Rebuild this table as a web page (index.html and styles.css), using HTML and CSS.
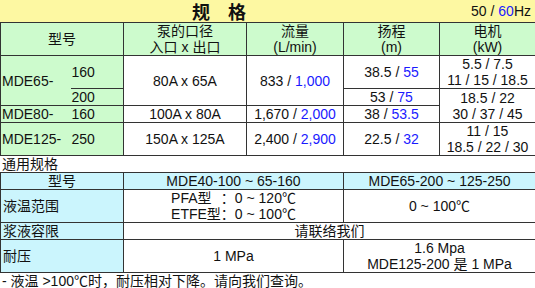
FILE: index.html
```html
<!DOCTYPE html>
<html lang="zh-CN">
<head>
<meta charset="utf-8">
<title>规格</title>
<link rel="stylesheet" href="styles.css">
</head>
<body>
<div class="title-bar">
  <div class="title">规　格</div>
  <div class="hz">50 / <span class="b">60</span>Hz</div>
</div>
<table class="spec">
  <colgroup>
    <col class="c-a"><col class="c-b"><col class="c-c"><col class="c-d"><col class="c-e"><col class="c-f">
  </colgroup>
  <tr class="h-row">
    <th colspan="2">型号</th>
    <th>泵的口径<br>入口 x 出口</th>
    <th>流量<br>(L/min)</th>
    <th>扬程<br>(m)</th>
    <th>电机<br>(kW)</th>
  </tr>
  <tr class="r-tall">
    <td rowspan="2" class="model">MDE65-</td>
    <td class="num split">160</td>
    <td rowspan="2">80A x 65A</td>
    <td rowspan="2">833 / <span class="b">1,000</span></td>
    <td>38.5 / <span class="b">55</span></td>
    <td>5.5 / 7.5<br>11 / 15 / 18.5</td>
  </tr>
  <tr class="r-mid">
    <td class="num">200</td>
    <td>53 / <span class="b">75</span></td>
    <td rowspan="2">18.5 / 22<br>30 / 37 / 45</td>
  </tr>
  <tr class="r-short">
    <td class="model">MDE80-</td>
    <td class="num">160</td>
    <td>100A x 80A</td>
    <td>1,670 / <span class="b">2,000</span></td>
    <td>38 / <span class="b">53.5</span></td>
  </tr>
  <tr class="r-tall last">
    <td class="model">MDE125-</td>
    <td class="num">250</td>
    <td>150A x 125A</td>
    <td>2,400 / <span class="b">2,900</span></td>
    <td>22.5 / <span class="b">32</span></td>
    <td>11 / 15<br>18.5 / 22 / 30</td>
  </tr>
</table>
<div class="sub-title">通用规格</div>
<table class="general">
  <colgroup>
    <col class="g-a"><col class="g-b"><col class="g-c">
  </colgroup>
  <tr class="g-head">
    <th>型号</th>
    <th>MDE40-100 ~ 65-160</th>
    <th>MDE65-200 ~ 125-250</th>
  </tr>
  <tr class="r-tall">
    <th class="label">液温范围</th>
    <td>
      <div class="temp">
        <span>PFA型</span><span>：0 ~ 120℃</span>
        <span>ETFE型</span><span>：0 ~ 100℃</span>
      </div>
    </td>
    <td>0 ~ 100℃</td>
  </tr>
  <tr class="r-short">
    <th class="label">浆液容限</th>
    <td colspan="2">请联络我们</td>
  </tr>
  <tr class="r-tall">
    <th class="label">耐压</th>
    <td>1 MPa</td>
    <td>1.6 Mpa<br>MDE125-200 是 1 MPa</td>
  </tr>
</table>
<p class="note">- 液温 &gt;100℃时，耐压相对下降。请向我们查询。</p>
</body>
</html>
```
FILE: styles.css
```css
html, body {
  margin: 0;
  padding: 0;
  background: #ffffff;
}
body {
  width: 535px;
  font-family: "Liberation Sans", "Noto Sans CJK SC", sans-serif;
  font-size: 14px;
  line-height: 16px;
  color: #111111;
}
.b {
  color: #1a1aff;
}
.title-bar {
  display: flex;
  align-items: center;
  height: 22px;
  background: #fdf8a2;
}
.title {
  width: 438px;
  height: 22px;
  text-align: center;
  font-family: "Noto Sans CJK SC", sans-serif;
  font-size: 18px;
  font-weight: bold;
  line-height: 22px;
}
.hz {
  flex: 1;
  text-align: right;
  padding-right: 4px;
}
table {
  border-collapse: collapse;
  table-layout: fixed;
  width: 535px;
}
td, th {
  border: 1px solid #333333;
  padding: 0;
  text-align: center;
  vertical-align: middle;
  font-weight: normal;
}
.c-a { width: 70px; }
.c-b { width: 53px; }
.c-c { width: 123px; }
.c-d { width: 97px; }
.c-e { width: 96px; }
.c-f { width: 96px; }
.spec th {
  background: #cdfbcd;
}
.spec .model,
.spec .num {
  background: #cdfbcd;
  text-align: left;
}
.spec .model {
  border-right: none;
  padding-left: 1px;
}
.spec .num {
  border-left: none;
  padding-left: 1px;
}
.h-row { height: 33px; }
.r-tall { height: 33px; }
.r-mid { height: 17px; }
.r-short { height: 16px; }
.g-head { height: 16px; }
.sub-title {
  height: 16px;
  line-height: 16px;
  padding-left: 2px;
}
.g-a { width: 123px; }
.g-b { width: 220px; }
.g-c { width: 192px; }
.g-head th {
  background: #cbf5fd;
}
.general .label {
  background: #cbf5fd;
  text-align: left;
  padding-left: 2px;
}
.temp {
  display: inline-grid;
  grid-template-columns: auto auto;
  text-align: left;
}
.note {
  margin: 0;
  padding-left: 2px;
  line-height: 16px;
}
```
